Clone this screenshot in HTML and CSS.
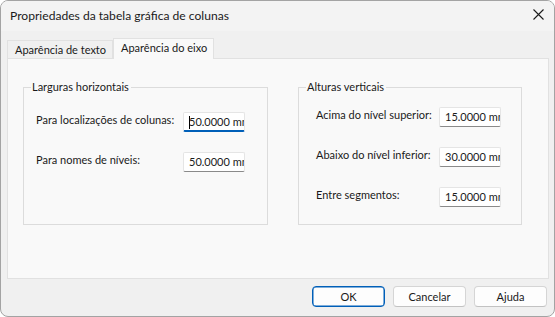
FILE: index.html
```html
<!DOCTYPE html>
<html lang="pt">
<head>
<meta charset="utf-8">
<title>Propriedades da tabela gráfica de colunas</title>
<link rel="stylesheet" href="styles.css">
</head>
<body>
<div class="window">
  <div class="titlebar">
    <span class="title">Propriedades da tabela gráfica de colunas</span>
    <span class="close">
      <svg width="11" height="11" viewBox="0 0 11 11"><path d="M0.5 0.5 L10.5 10.5 M10.5 0.5 L0.5 10.5" stroke="#1a1a1a" stroke-width="1.1" fill="none"/></svg>
    </span>
  </div>
  <div class="content">
    <div class="tabs">
      <div class="tab">Aparência de texto</div>
      <div class="tab active">Aparência do eixo</div>
    </div>
    <div class="panel">
      <fieldset class="group group-h">
        <legend>Larguras horizontais</legend>
        <div class="rows rows-h">
          <span class="label">Para localizações de colunas:</span>
          <div class="field focused"><span class="caret"></span>50.0000 mm</div>
          <span class="label">Para nomes de níveis:</span>
          <div class="field">50.0000 mm</div>
        </div>
      </fieldset>
      <fieldset class="group group-v">
        <legend>Alturas verticais</legend>
        <div class="rows rows-v">
          <span class="label">Acima do nível superior:</span>
          <div class="field">15.0000 mm</div>
          <span class="label">Abaixo do nível inferior:</span>
          <div class="field">30.0000 mm</div>
          <span class="label">Entre segmentos:</span>
          <div class="field">15.0000 mm</div>
        </div>
      </fieldset>
    </div>
    <div class="footer">
      <button class="btn default">OK</button>
      <button class="btn">Cancelar</button>
      <button class="btn">Ajuda</button>
    </div>
  </div>
</div>
</body>
</html>
```
FILE: styles.css
```css
* { box-sizing: border-box; }
html, body { margin: 0; padding: 0; background: #ffffff; }
body {
  font-family: "Lato", "Segoe UI", "Noto Sans", sans-serif;
  font-size: 11px;
  color: #1a1a1a;
}
.window {
  width: 555px;
  height: 317px;
  border: 1px solid #a3a3a3;
  border-radius: 8px;
  overflow: hidden;
  display: flex;
  flex-direction: column;
  background: #f0f0f0;
}
.titlebar {
  height: 30px;
  background: #f3f3f3;
  display: flex;
  align-items: center;
  justify-content: space-between;
  padding: 0 10px 1px 9px;
  flex: none;
}
.title { font-size: 12.1px; color: #1a1a1a; }
.close { display: flex; width: 11px; height: 11px; margin-top: -2px; }
.content {
  flex: 1;
  display: flex;
  flex-direction: column;
  padding: 7px 6px 0 6px;
}
.tabs {
  display: flex;
  align-items: flex-end;
  height: 20px;
  position: relative;
  z-index: 1;
}
.tab {
  height: 18px;
  padding: 0 6px 0 7px;
  border: 1px solid #e1e1e1;
  border-bottom: none;
  background: #f0f0f0;
  line-height: 17px;
  white-space: nowrap;
}
.tab.active {
  height: 21px;
  margin-bottom: -1px;
  background: #f9f9f9;
  padding: 0 6px 0 7px;
  line-height: 18px;
}
.panel {
  height: 221px;
  width: 542px;
  background: #f9f9f9;
  border: 1px solid #e1e1e1;
  display: flex;
  align-items: flex-start;
  padding: 21px 0 0 15px;
  gap: 30px;
}
.group {
  margin: 0;
  border: 1px solid #dcdcdc;
  height: 145px;
  padding: 0;
}
.group legend {
  padding: 0 2px 0 1px;
  margin-left: 7px;
  line-height: 14px;
}
.group-h { width: 245px; }
.group-v { width: 224px; }
.rows {
  display: grid;
  align-items: center;
}
.rows-h {
  grid-template-columns: 147px 62px;
  row-gap: 20px;
  padding: 18px 0 0 12px;
}
.rows-v {
  grid-template-columns: 123px 62px;
  row-gap: 20px;
  padding: 13px 0 0 17px;
}
.label { margin-top: -5px; white-space: nowrap; }
.field {
  height: 20px;
  width: 62px;
  background: #ffffff;
  border: 1px solid #e5e5e5;
  border-bottom: 1px solid #8a8a8a;
  border-radius: 2px;
  overflow: hidden;
  white-space: nowrap;
  padding: 0 0 0 5px;
  line-height: 18px;
  position: relative;
}
.field.focused {
  border-bottom: 2px solid #005fb8;
}
.caret {
  position: absolute;
  left: 5px;
  top: 3px;
  width: 1px;
  height: 13px;
  background: #000;
}
.footer {
  flex: 1;
  display: flex;
  justify-content: flex-end;
  align-items: flex-start;
  gap: 8px;
  padding: 7px 1px 0 0;
}
.btn {
  width: 73px;
  height: 21px;
  font: inherit;
  color: #1a1a1a;
  background: #fdfdfd;
  border: 1px solid #d5d5d5;
  border-bottom-color: #c2c2c2;
  border-radius: 4px;
  padding: 0;
}
.btn.default {
  border: 1px solid #005fb8;
  box-shadow: inset 0 0 0 0.5px #005fb8;
}
```
